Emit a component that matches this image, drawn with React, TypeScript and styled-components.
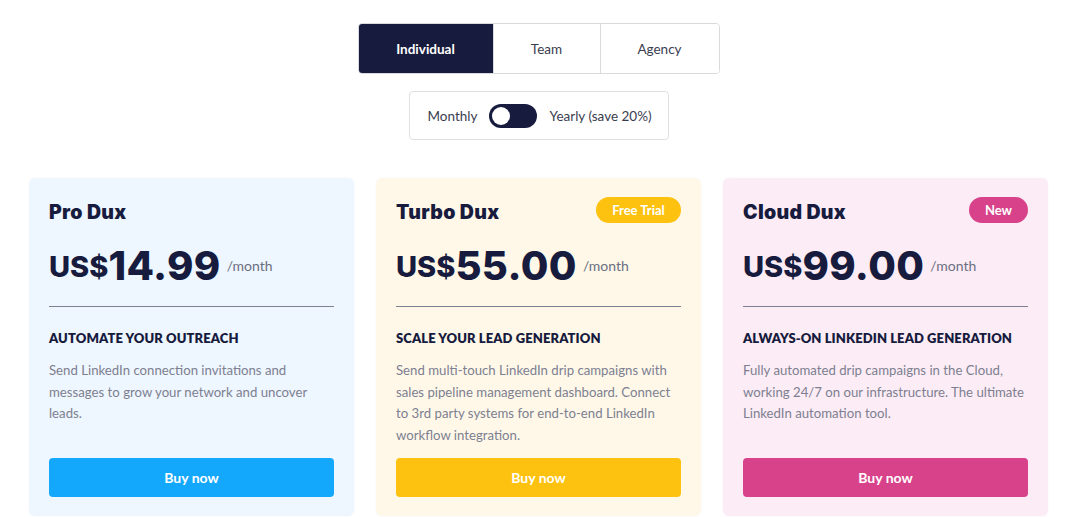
import React, { useState } from "react";
import styled, { createGlobalStyle } from "styled-components";

const Global = createGlobalStyle`
  html, body { margin: 0; padding: 0; background: #ffffff; }
  body { font-family: "Lato", "Noto Sans", sans-serif; color: #171b3d; }
  * { box-sizing: border-box; }
`;

const Page = styled.div`
  width: 1088px;
  height: 517px;
  overflow: hidden;
  display: flex;
  flex-direction: column;
  align-items: center;
  padding: 23px 11px 0 0;
`;

const Tabs = styled.div`
  display: flex;
  height: 51px;
  border: 1px solid #d9dade;
  border-radius: 4px;
  overflow: hidden;
`;

const Tab = styled.button<{ $active?: boolean; $w: number }>`
  width: ${(p) => p.$w}px;
  border: none;
  border-left: ${(p) => (p.$active ? "none" : "1px solid #d9dade")};
  &:first-child { border-left: none; }
  background: ${(p) => (p.$active ? "#171b3d" : "#ffffff")};
  color: ${(p) => (p.$active ? "#ffffff" : "#3a3d4f")};
  font-family: "Lato", sans-serif;
  font-size: 13.5px;
  font-weight: ${(p) => (p.$active ? 700 : 400)};
  cursor: pointer;
  padding: 0;
`;

const Billing = styled.div`
  margin-top: 17px;
  width: 260px;
  height: 49px;
  border: 1px solid #dfe0e4;
  border-radius: 4px;
  display: flex;
  align-items: center;
  padding-left: 18px;
  gap: 12px;
  font-size: 13.5px;
  color: #3a3d4f;
`;

const Switch = styled.div`
  width: 48px;
  height: 24px;
  border-radius: 12px;
  background: #171b3d;
  padding: 3px;
  display: flex;
  align-items: center;
`;

const Knob = styled.div`
  width: 18px;
  height: 18px;
  border-radius: 50%;
  background: #ffffff;
`;

const Cards = styled.div`
  margin-top: 38px;
  display: grid;
  grid-template-columns: repeat(3, 325px);
  gap: 22px;
  align-items: stretch;
`;

const Card = styled.div<{ $bg: string }>`
  background: ${(p) => p.$bg};
  border-radius: 6px;
  padding: 19px 20px 19px;
  display: flex;
  flex-direction: column;
  height: 338px;
  box-shadow: 0 0 3px rgba(0, 0, 0, 0.04);
`;

const Header = styled.div`
  display: flex;
  justify-content: space-between;
  align-items: center;
  height: 26px;
`;

const Title = styled.h2`
  margin: 4px 0 0;
  font-family: "Inter", sans-serif;
  font-weight: 900;
  font-size: 19.5px;
  letter-spacing: 0.3px;
  color: #171b3d;
`;

const Badge = styled.span<{ $bg: string; $w: number }>`
  width: ${(p) => p.$w}px;
  height: 26px;
  border-radius: 13px;
  background: ${(p) => p.$bg};
  color: #ffffff;
  font-size: 13px;
  font-weight: 700;
  display: flex;
  align-items: center;
  justify-content: center;
`;

const PriceRow = styled.div`
  display: flex;
  align-items: center;
  margin-top: 23px;
  height: 40px;
  line-height: 1;
  color: #171b3d;
  font-family: "Inter", sans-serif;
  font-weight: 800;
`;

const Currency = styled.span`
  font-size: 29px;
`;

const Amount = styled.span`
  font-size: 40px;
  letter-spacing: 0.4px;
`;

const Per = styled.span`
  font-family: "Lato", sans-serif;
  font-size: 14px;
  font-weight: 400;
  color: #6b6f80;
  margin-left: 6px;
`;

const Divider = styled.hr`
  margin: 20px 0 0;
  border: none;
  border-top: 1px solid #7d8191;
`;

const Subtitle = styled.h3`
  margin: 23px 0 0;
  font-size: 13px;
  font-weight: 800;
  color: #171b3d;
  letter-spacing: 0.1px;
`;

const Desc = styled.p`
  margin: 14px 0 0;
  font-size: 13.2px;
  line-height: 21.5px;
  color: #7d8090;
`;

const Buy = styled.button<{ $bg: string }>`
  margin-top: auto;
  height: 39px;
  width: 100%;
  border: none;
  border-radius: 4px;
  background: ${(p) => p.$bg};
  color: #ffffff;
  font-family: "Lato", sans-serif;
  font-size: 14px;
  font-weight: 700;
  cursor: pointer;
`;

const plans = [
  {
    name: "Pro Dux",
    price: "14.99",
    bg: "#eef6ff",
    accent: "#14a8fc",
    sub: "AUTOMATE YOUR OUTREACH",
    desc: "Send LinkedIn connection invitations and messages to grow your network and uncover leads.",
  },
  {
    name: "Turbo Dux",
    price: "55.00",
    bg: "#fff8e9",
    accent: "#fdc20f",
    badge: "Free Trial",
    badgeW: 85,
    sub: "SCALE YOUR LEAD GENERATION",
    desc: "Send multi-touch LinkedIn drip campaigns with sales pipeline management dashboard. Connect to 3rd party systems for end-to-end LinkedIn workflow integration.",
  },
  {
    name: "Cloud Dux",
    price: "99.00",
    bg: "#fcecf6",
    accent: "#d8428a",
    badge: "New",
    badgeW: 59,
    sub: "ALWAYS-ON LINKEDIN LEAD GENERATION",
    desc: "Fully automated drip campaigns in the Cloud, working 24/7 on our infrastructure. The ultimate LinkedIn automation tool.",
  },
];

export default function App() {
  const [tab, setTab] = useState("Individual");
  const tabs: [string, number][] = [
    ["Individual", 134],
    ["Team", 107],
    ["Agency", 119],
  ];
  return (
    <Page>
      <Global />
      <Tabs>
        {tabs.map(([t, w]) => (
          <Tab key={t} $w={w} $active={tab === t} onClick={() => setTab(t)}>
            {t}
          </Tab>
        ))}
      </Tabs>
      <Billing>
        <span>Monthly</span>
        <Switch>
          <Knob />
        </Switch>
        <span>Yearly (save 20%)</span>
      </Billing>
      <Cards>
        {plans.map((p) => (
          <Card key={p.name} $bg={p.bg}>
            <Header>
              <Title>{p.name}</Title>
              {p.badge && (
                <Badge $bg={p.accent} $w={p.badgeW!}>
                  {p.badge}
                </Badge>
              )}
            </Header>
            <PriceRow>
              <Currency>US$</Currency>
              <Amount>{p.price}</Amount>
              <Per>/month</Per>
            </PriceRow>
            <Divider />
            <Subtitle>{p.sub}</Subtitle>
            <Desc>{p.desc}</Desc>
            <Buy $bg={p.accent}>Buy now</Buy>
          </Card>
        ))}
      </Cards>
    </Page>
  );
}
